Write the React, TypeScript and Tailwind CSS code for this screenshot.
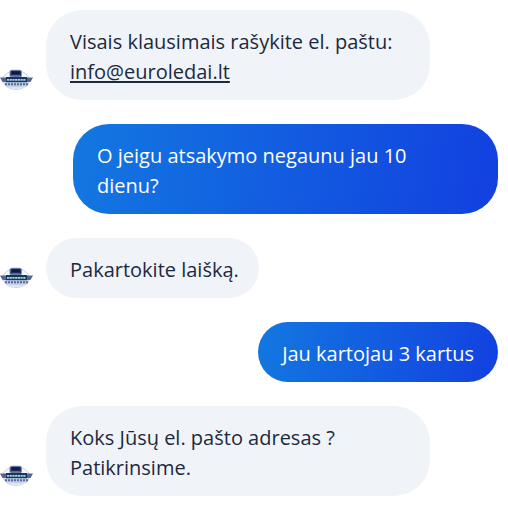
import type { ReactNode } from 'react';

type Message = {
    id: number;
    from: 'agent' | 'visitor';
    width?: string;
    body: ReactNode;
};

const messages: Message[] = [
    {
        id: 1,
        from: 'agent',
        width: 'w-96',
        body: (
            <>
                Visais klausimais rašykite el. paštu:{' '}
                <br />
                <a href="mailto:info@euroledai.lt" className="underline decoration-2 underline-offset-2 [text-decoration-skip-ink:none]">
                    info@euroledai.lt
                </a>
            </>
        ),
    },
    { id: 2, from: 'visitor', width: 'w-[425px]', body: <>O jeigu atsakymo negaunu jau 10 <br />dienu?</> },
    { id: 3, from: 'agent', body: 'Pakartokite laišką.' },
    { id: 4, from: 'visitor', body: 'Jau kartojau 3 kartus' },
    { id: 5, from: 'agent', width: 'w-96', body: <>Koks Jūsų el. pašto adresas ? <br />Patikrinsime.</> },
];

function Avatar() {
    return (
        <svg viewBox="0 0 34 24" className="mb-2 h-6 w-[34px] shrink-0" aria-hidden="true">
            {/* outer ring */}
            <ellipse cx="16" cy="12" rx="13" ry="9.5" fill="#f4f7fc" stroke="#b9c6dc" strokeWidth="0.8" />
            {/* truck cab */}
            <path d="M9.500 8.500V4.500Q9.500 1.800 12 1.800H19.500Q22 1.800 22 4.500V8.500Z" fill="#7f8fb8" />
            <path d="M10.500 4Q10.500 2.800 12 2.800H19.500Q21 2.800 21 4V8.500H10.500Z" fill="#1d2d62" />
            <path d="M12 3.500H19.500V6H12Z" fill="#101a3e" />
            <path d="M11 7.500H20.500" stroke="#4674a8" strokeWidth="1" />
            {/* banner */}
            <path d="M0 9.500H33L30.500 14H2.500Z" fill="#56648f" />
            <path d="M6 9H27V14.500H6Z" fill="#17365f" />
            <path d="M7 11.800H26" stroke="#a4d5df" strokeWidth="1.800" strokeDasharray="2.200 0.500" />
            <path d="M3.500 14.500H29.500L27 18.500Q16 20.500 6 18.500Z" fill="#c3cde6" />
            <path d="M5 16.300H28" stroke="#5a679d" strokeWidth="2" strokeDasharray="2 1" />
            <path d="M8 18.500Q16 22 25 18.500" fill="none" stroke="#dfe7f5" strokeWidth="1" />
        </svg>
    );
}

function AgentMessage({ message }: { message: Message }) {
    return (
        <div className="flex items-end gap-3">
            <Avatar />
            <div className={`rounded-[36px] bg-[#f0f4f9] pt-[17px] pr-5 pb-[13px] pl-6 text-slate-800 ${message.width ?? ''}`}>
                {message.body}
            </div>
        </div>
    );
}

function VisitorMessage({ message }: { message: Message }) {
    return (
        <div className="flex justify-end">
            <div
                className={`rounded-[36px] bg-linear-[100deg] from-[#1378e0] to-[#1240e0] px-6 pt-[17px] pb-[13px] font-medium text-white ${message.width ?? ''}`}
            >
                {message.body}
            </div>
        </div>
    );
}

export default function App() {
    return (
        <main className="flex flex-col gap-6 bg-white pt-[10px] pr-[10px] font-['Open_Sans',sans-serif] text-[20px] leading-[30px]">
            {messages.map((message) =>
                message.from === 'agent' ? (
                    <AgentMessage key={message.id} message={message} />
                ) : (
                    <VisitorMessage key={message.id} message={message} />
                )
            )}
        </main>
    );
}
